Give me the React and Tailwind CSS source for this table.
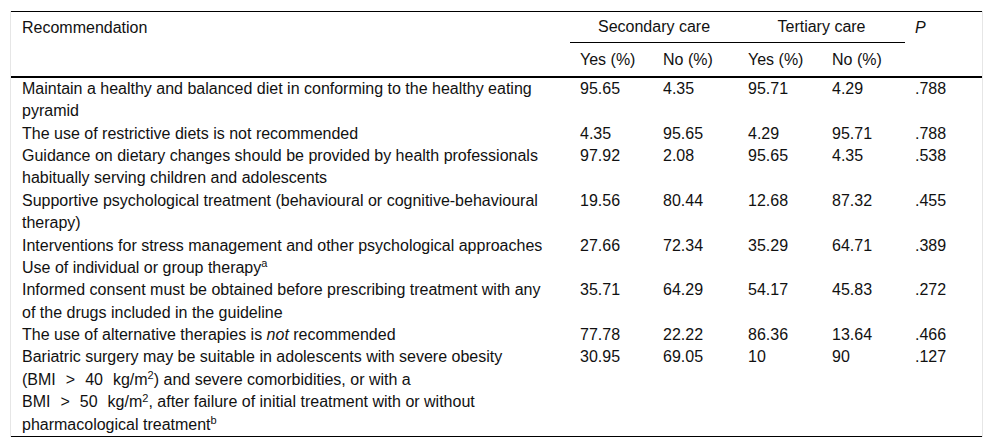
import React from 'react';

const Gap = () => <span className="inline-block w-[10px]" />;

const rows = [
  {
    text: (
      <>
        Maintain a healthy and balanced diet in conforming to the healthy eating
        <br />
        pyramid
      </>
    ),
    vals: ['95.65', '4.35', '95.71', '4.29', '.788'],
  },
  {
    text: 'The use of restrictive diets is not recommended',
    vals: ['4.35', '95.65', '4.29', '95.71', '.788'],
  },
  {
    text: (
      <>
        Guidance on dietary changes should be provided by health professionals
        <br />
        habitually serving children and adolescents
      </>
    ),
    vals: ['97.92', '2.08', '95.65', '4.35', '.538'],
  },
  {
    text: (
      <>
        Supportive psychological treatment (behavioural or cognitive-behavioural
        <br />
        therapy)
      </>
    ),
    vals: ['19.56', '80.44', '12.68', '87.32', '.455'],
  },
  {
    text: (
      <>
        Interventions for stress management and other psychological approaches
        <br />
        Use of individual or group therapy<sup className="text-[11px]">a</sup>
      </>
    ),
    vals: ['27.66', '72.34', '35.29', '64.71', '.389'],
  },
  {
    text: (
      <>
        Informed consent must be obtained before prescribing treatment with any
        <br />
        of the drugs included in the guideline
      </>
    ),
    vals: ['35.71', '64.29', '54.17', '45.83', '.272'],
  },
  {
    text: (
      <>
        The use of alternative therapies is <i>not</i> recommended
      </>
    ),
    vals: ['77.78', '22.22', '86.36', '13.64', '.466'],
  },
  {
    text: (
      <>
        Bariatric surgery may be suitable in adolescents with severe obesity
        <br />
        (BMI<Gap />&gt;<Gap />40<Gap />kg/m<sup className="text-[11px]">2</sup>) and severe comorbidities, or with a
        <br />
        BMI<Gap />&gt;<Gap />50<Gap />kg/m<sup className="text-[11px]">2</sup>, after failure of initial treatment with or without
        <br />
        pharmacological treatment<sup className="text-[11px]">b</sup>
      </>
    ),
    vals: ['30.95', '69.05', '10', '90', '.127'],
  },
];

export default function App() {
  return (
    <div className="min-h-screen bg-white pt-[11px] pl-[10px] font-['Liberation_Sans',Arial,sans-serif] text-[16px] leading-[1.4] text-[#111]">
      <div className="w-[973px] border-x border-[#e6e6e6]">
        <table className="w-full table-fixed border-collapse border-y border-black">
          <colgroup>
            <col className="w-[559px]" />
            <col className="w-[83px]" />
            <col className="w-[85px]" />
            <col className="w-[84px]" />
            <col className="w-[83px]" />
            <col />
          </colgroup>
          <thead className="border-b-2 border-black">
            <tr>
              <th rowSpan={2} className="pl-[11px] pt-[5px] text-left align-top font-normal">
                Recommendation
              </th>
              <th colSpan={2} className="border-b border-black pt-[4px] pb-[4px] text-center font-normal">
                Secondary care
              </th>
              <th colSpan={2} className="border-b border-black pt-[4px] pb-[4px] text-center font-normal">
                Tertiary care
              </th>
              <th rowSpan={2} className="pl-[10px] pt-[5px] text-left align-top font-normal italic">
                P
              </th>
            </tr>
            <tr>
              {['Yes (%)', 'No (%)', 'Yes (%)', 'No (%)'].map((h, i) => (
                <th key={i} className="pl-[10px] pt-[6px] pb-[4px] text-left font-normal">
                  {h}
                </th>
              ))}
            </tr>
          </thead>
          <tbody>
            {rows.map((r, i) => (
              <tr key={i} className="align-top">
                <td className="pl-[11px] pr-[10px]">{r.text}</td>
                {r.vals.map((v, j) => (
                  <td key={j} className="pl-[10px]">
                    {v}
                  </td>
                ))}
              </tr>
            ))}
          </tbody>
        </table>
      </div>
    </div>
  );
}
